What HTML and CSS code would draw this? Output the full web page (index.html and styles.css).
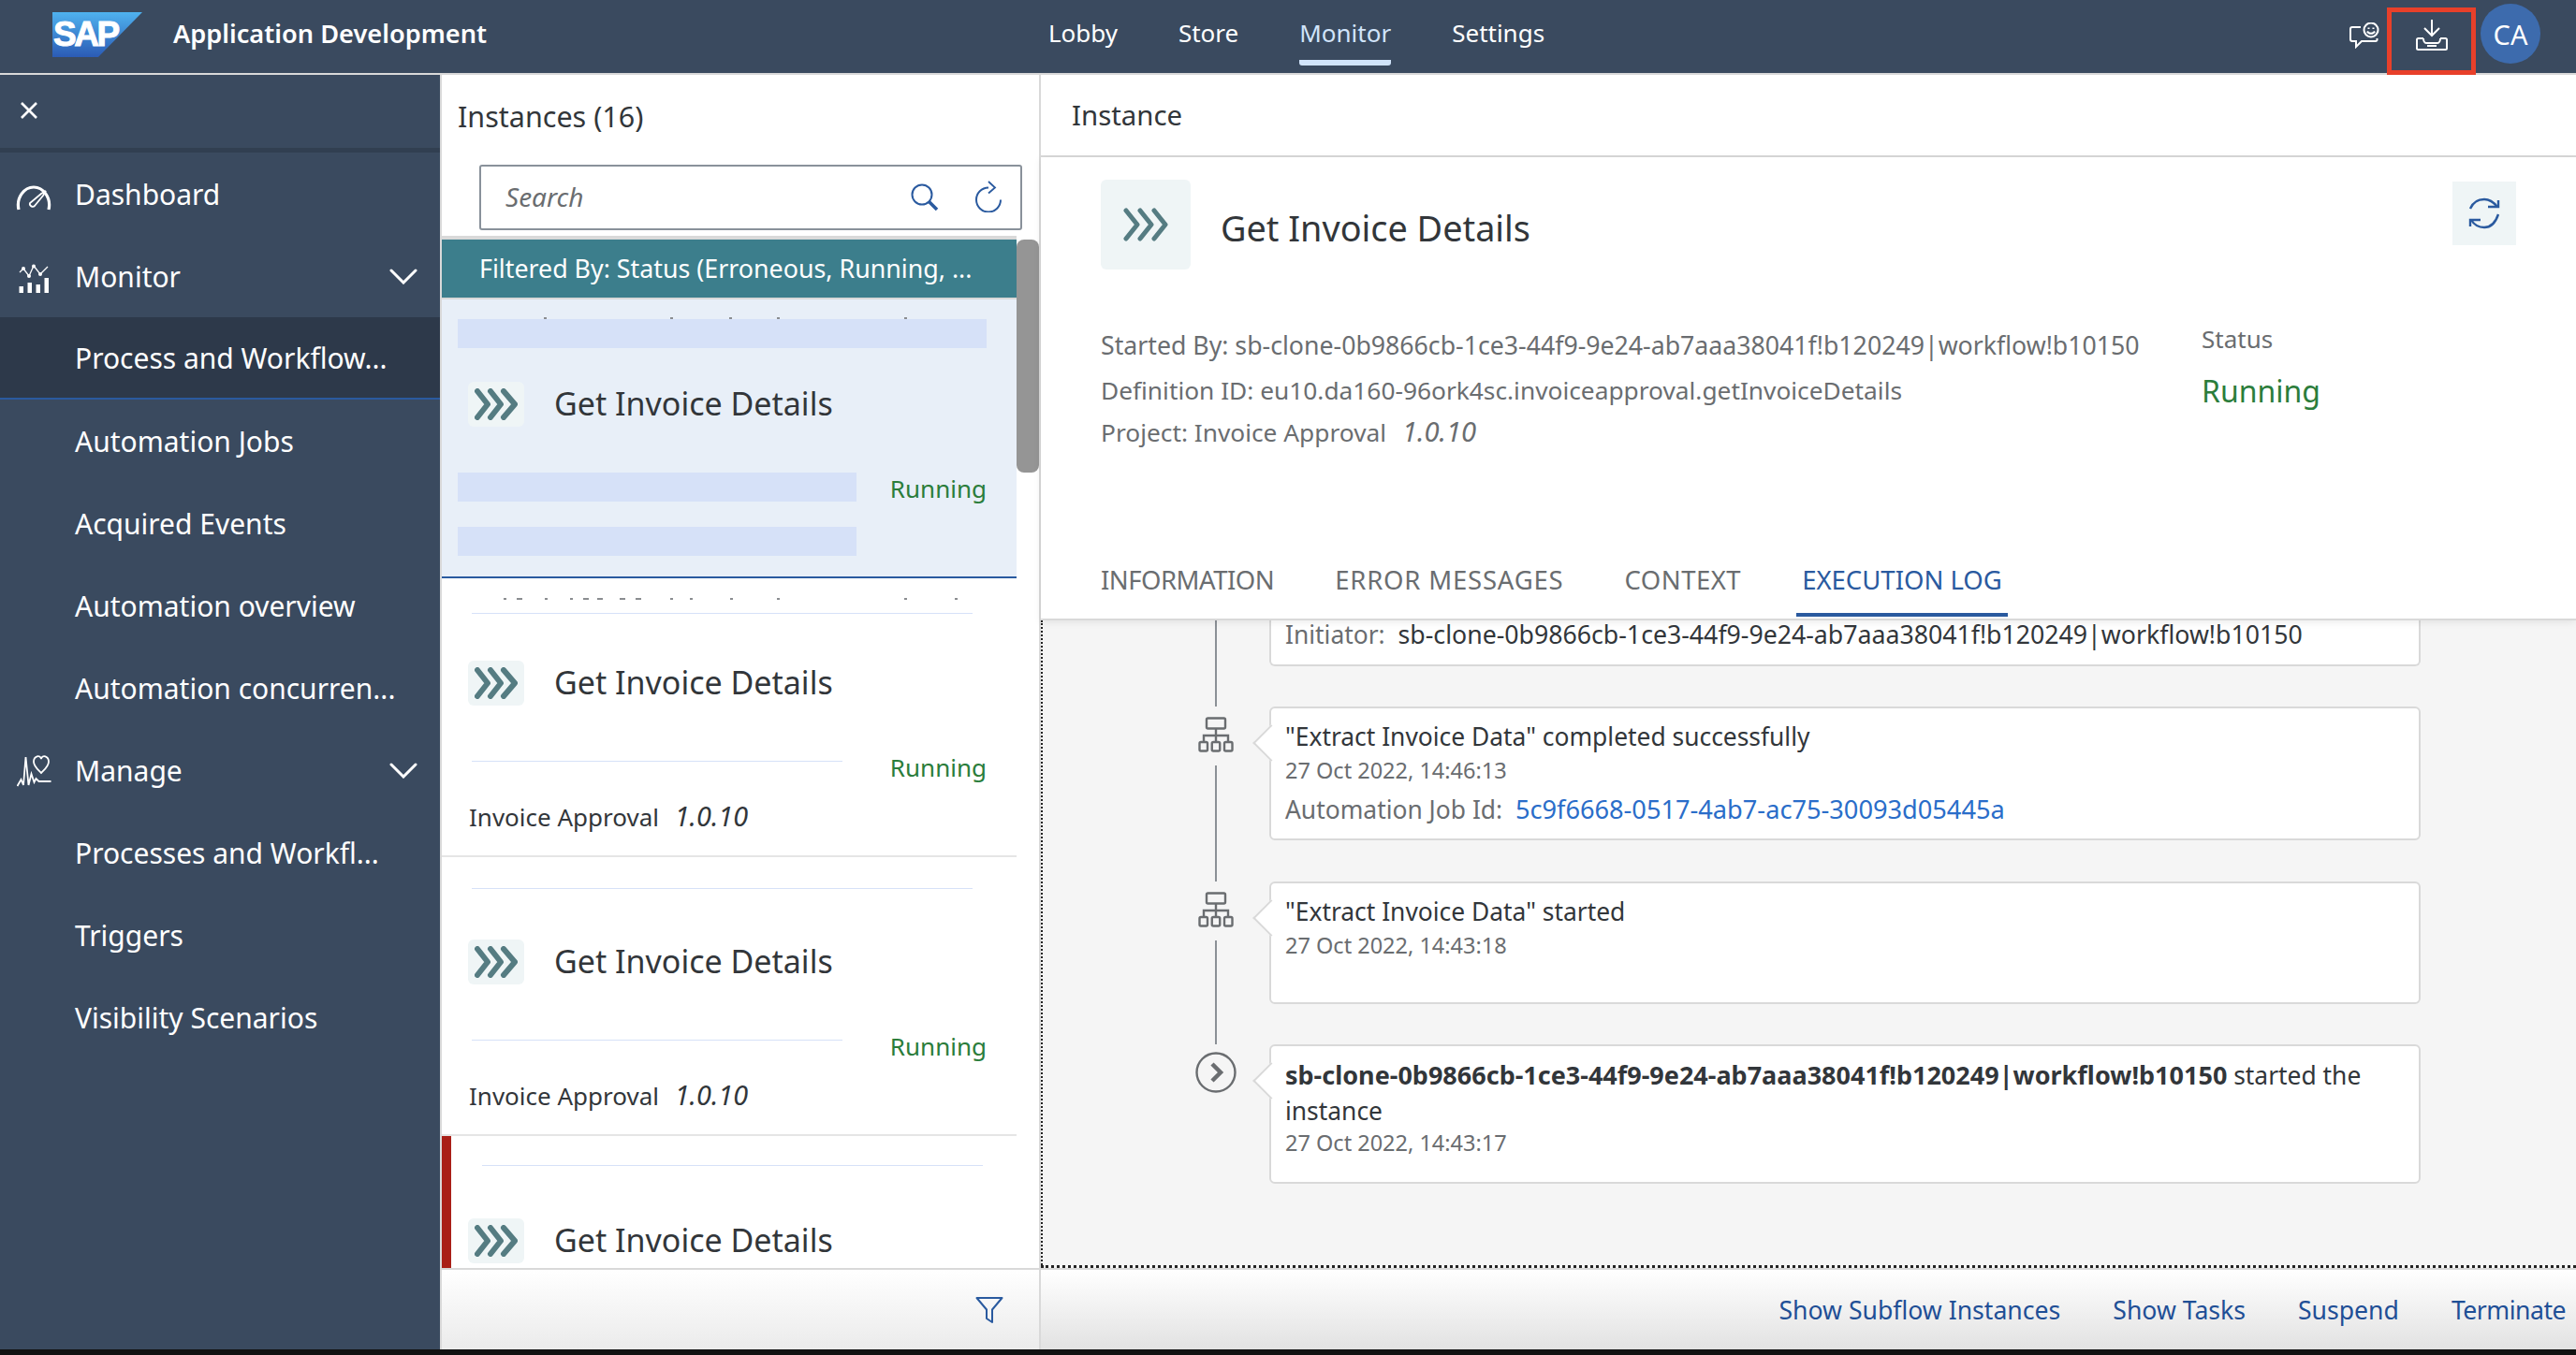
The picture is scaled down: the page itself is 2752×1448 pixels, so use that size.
FILE: index.html
```html
<!DOCTYPE html>
<html lang="en">
<head>
<meta charset="utf-8">
<title>Application Development</title>
<link rel="stylesheet" href="styles.css">
</head>
<body>
<div class="app">
  <header class="shell">
    <div class="brand">
      <div class="logo"><span class="logo-text">SAP</span></div>
      <div class="app-title">Application Development</div>
    </div>
    <nav class="top-nav">
      <a class="top-link">Lobby</a>
      <a class="top-link">Store</a>
      <a class="top-link is-active">Monitor</a>
      <a class="top-link">Settings</a>
    </nav>
    <div class="shell-actions">
      <svg class="ic-feedback" width="32" height="28" viewBox="0 0 32 28" fill="none" stroke="#fff" stroke-width="2"><path d="M12 5H3a2 2 0 0 0-2 2v11a2 2 0 0 0 2 2h4v6l6-6h15a1.500 1.500 0 0 0 1.500-1.500V17"/><circle cx="23" cy="8" r="7.500"/><path d="M19 9.500c1.500 3 6.500 3 8 0"/><path d="M20.500 5.500v1.500M25.500 5.500v1.500"/></svg>
      <div class="download-btn">
        <svg width="34" height="34" viewBox="0 0 34 34" fill="none" stroke="#fff" stroke-width="2"><path d="M17 1v17M9 10l8 8 8-8"/><path d="M8 21H2.500a1.500 1.500 0 0 0-1.500 1.500v9a1.500 1.500 0 0 0 1.500 1.500h29a1.500 1.500 0 0 0 1.500-1.500v-9a1.500 1.500 0 0 0-1.500-1.500H26"/><path d="M8 21c0 2 1 5 3 5h12c2 0 3-3 3-5"/><path d="M12 29h10"/></svg>
      </div>
      <div class="avatar">CA</div>
    </div>
  </header>

  <div class="main">
    <aside class="side">
      <div class="side-top">
        <svg width="20" height="20" viewBox="0 0 20 20" fill="none" stroke="#fff" stroke-width="2.600"><path d="M2 2l16 16M18 2L2 18"/></svg>
      </div>
      <div class="side-row"><span class="side-icon"><svg class="ic-gauge" width="38" height="27" viewBox="0 0 38 27" fill="none" stroke="#fff" stroke-width="3.200"><path d="M3 26C0 13 9 2 19 2s19 11 16 24"/><path d="M27 9l5-3-3 5-9 11c-2 2-6 0-5-3z" stroke-width="1.800"/></svg></span><span class="side-label">Dashboard</span></div>
      <div class="side-row"><span class="side-icon"><svg class="ic-monitor" width="33" height="31" viewBox="0 0 33 31" fill="none" stroke="#fff" stroke-width="1.300"><path d="M1 9l4-4 6 8 5-11 7 9 8-8"/><g fill="#fff" stroke="none"><circle cx="5" cy="5" r="2"/><circle cx="11" cy="13" r="2"/><circle cx="16" cy="2.500" r="2"/><circle cx="23" cy="11" r="2"/><rect x="0.500" y="24" width="4.500" height="7"/><rect x="9.500" y="20" width="4.500" height="11"/><rect x="18.500" y="22" width="4.500" height="9"/><rect x="27.500" y="15" width="4.500" height="16"/></g></svg></span><span class="side-label">Monitor</span><svg class="chev" width="30" height="18" viewBox="0 0 30 18" fill="none" stroke="#fff" stroke-width="3" stroke-linecap="round"><path d="M2 3l13 13L28 3"/></svg></div>
      <div class="side-row is-current"><span class="side-icon"></span><span class="side-label">Process and Workflow...</span></div>
      <div class="side-row"><span class="side-icon"></span><span class="side-label">Automation Jobs</span></div>
      <div class="side-row"><span class="side-icon"></span><span class="side-label">Acquired Events</span></div>
      <div class="side-row"><span class="side-icon"></span><span class="side-label">Automation overview</span></div>
      <div class="side-row"><span class="side-icon"></span><span class="side-label">Automation concurren...</span></div>
      <div class="side-row"><span class="side-icon"><svg class="ic-manage" width="37" height="36" viewBox="0 0 37 36" fill="none" stroke="#fff" stroke-width="1.800"><path d="M0.500 35l4-7 2.500 6L9.500 4l3 30 3-12 3 9 2-4 3 3h13"/><path d="M26 21c-3-3-8-7-8-12 0-6 7-8 8-3 1-5 8-3 8 3 0 5-5 9-8 12z"/></svg></span><span class="side-label">Manage</span><svg class="chev" width="30" height="18" viewBox="0 0 30 18" fill="none" stroke="#fff" stroke-width="3" stroke-linecap="round"><path d="M2 3l13 13L28 3"/></svg></div>
      <div class="side-row"><span class="side-icon"></span><span class="side-label">Processes and Workfl...</span></div>
      <div class="side-row"><span class="side-icon"></span><span class="side-label">Triggers</span></div>
      <div class="side-row"><span class="side-icon"></span><span class="side-label">Visibility Scenarios</span></div>
    </aside>

    <section class="list-panel">
      <div class="scroll-thumb"></div>
      <div class="list-head">Instances (16)</div>
      <div class="search-wrap">
        <div class="search">
          <span class="search-text">Search</span>
          <svg class="ic-search" width="30" height="30" viewBox="0 0 30 30" fill="none" stroke="#2a5a9f" stroke-width="2"><circle cx="12" cy="12" r="10.500"/><path d="M19.500 19.500L28 28" stroke-width="3.500"/></svg>
          <svg class="ic-reload" width="30" height="34" viewBox="0 0 30 34" fill="none" stroke="#2a5a9f" stroke-width="2"><path d="M15 7.500a13 13 0 1 0 13 13"/><path d="M15 1l7 6.500-7 6" stroke-width="1.800"/></svg>
        </div>
      </div>
      <div class="filter-bar">Filtered By: Status (Erroneous, Running, ...</div>
      <div class="list">
        <article class="item is-selected">
          <div class="item-top">
            <svg class="ticks ticks-a" width="400" height="2" viewBox="0 0 400 2" fill="#8a8d90"><rect x="0" width="3" height="2"/><rect x="135" width="3" height="2"/><rect x="198" width="3" height="2"/><rect x="249" width="3" height="2"/><rect x="385" width="3" height="2"/></svg>
            <div class="mask mask-wide"></div>
          </div>
          <div class="item-head">
            <span class="flow-icon"><svg width="46" height="34" viewBox="0 0 46 34" fill="none" stroke="#557c82" stroke-width="6" stroke-linecap="round" stroke-linejoin="round"><path d="M3 3l11 14L3 31M17 3l11 14-11 14M31 3l12 14-12 14"/></svg></span>
            <h3 class="item-title">Get Invoice Details</h3>
          </div>
          <div class="item-meta">
            <div class="meta-left">
              <div class="mask"></div>
              <div class="mask mask-gap"></div>
            </div>
            <span class="state">Running</span>
          </div>
        </article>
        <article class="item">
          <div class="item-top">
            <svg class="ticks ticks-b" width="490" height="2" viewBox="0 0 490 2" fill="#8a8d90"><rect x="0" width="3" height="2"/><rect x="14" width="6" height="2"/><rect x="44" width="3" height="2"/><rect x="71" width="3" height="2"/><rect x="85" width="6" height="2"/><rect x="100" width="6" height="2"/><rect x="124" width="6" height="2"/><rect x="141" width="6" height="2"/><rect x="178" width="3" height="2"/><rect x="199" width="3" height="2"/><rect x="242" width="3" height="2"/><rect x="292" width="3" height="2"/><rect x="428" width="3" height="2"/><rect x="482" width="3" height="2"/></svg>
            <div class="rule rule-wide"></div>
          </div>
          <div class="item-head">
            <span class="flow-icon"><svg width="46" height="34" viewBox="0 0 46 34" fill="none" stroke="#557c82" stroke-width="6" stroke-linecap="round" stroke-linejoin="round"><path d="M3 3l11 14L3 31M17 3l11 14-11 14M31 3l12 14-12 14"/></svg></span>
            <h3 class="item-title">Get Invoice Details</h3>
          </div>
          <div class="item-meta">
            <div class="meta-left">
              <div class="rule rule-short"></div>
              <div class="project">Invoice Approval <em class="version">1.0.10</em></div>
            </div>
            <span class="state">Running</span>
          </div>
        </article>
        <article class="item">
          <div class="item-top">
            <div class="rule rule-wide rule-plain"></div>
          </div>
          <div class="item-head">
            <span class="flow-icon"><svg width="46" height="34" viewBox="0 0 46 34" fill="none" stroke="#557c82" stroke-width="6" stroke-linecap="round" stroke-linejoin="round"><path d="M3 3l11 14L3 31M17 3l11 14-11 14M31 3l12 14-12 14"/></svg></span>
            <h3 class="item-title">Get Invoice Details</h3>
          </div>
          <div class="item-meta">
            <div class="meta-left">
              <div class="rule rule-short"></div>
              <div class="project">Invoice Approval <em class="version">1.0.10</em></div>
            </div>
            <span class="state">Running</span>
          </div>
        </article>
        <article class="item is-error">
          <div class="item-top">
            <div class="rule rule-wide rule-plain rule-shifted"></div>
          </div>
          <div class="item-head">
            <span class="flow-icon"><svg width="46" height="34" viewBox="0 0 46 34" fill="none" stroke="#557c82" stroke-width="6" stroke-linecap="round" stroke-linejoin="round"><path d="M3 3l11 14L3 31M17 3l11 14-11 14M31 3l12 14-12 14"/></svg></span>
            <h3 class="item-title">Get Invoice Details</h3>
          </div>
        </article>
      </div>
      <footer class="list-foot">
        <svg width="30" height="30" viewBox="0 0 30 30" fill="none" stroke="#2a5a9f" stroke-width="2" stroke-linejoin="round"><path d="M1.500 2h27L18 14.500V28l-6-4V14.500z"/></svg>
      </footer>
    </section>

    <section class="detail">
      <div class="detail-bar">Instance</div>
      <div class="detail-head">
        <div class="head-row">
          <span class="flow-icon flow-icon-lg"><svg width="48" height="36" viewBox="0 0 48 36" fill="none" stroke="#557c82" stroke-width="5" stroke-linecap="round" stroke-linejoin="round"><path d="M3 3l12 15L3 33M18 3l12 15-12 15M33 3l12 15-12 15"/></svg></span>
          <h2 class="detail-title">Get Invoice Details</h2>
          <span class="refresh-btn"><svg width="34" height="34" viewBox="0 0 34 34" fill="none" stroke="#2a5a9f" stroke-width="2.400"><path d="M2 12C5 5 10 2 17 2c6 0 10 3 14 8"/><path d="M32 18C29 27 24 32 17 32c-6 0-11-3-14-8"/><path d="M21 10h11V3M13 24H2v7"/></svg></span>
        </div>
        <div class="meta-row">
          <div class="meta-lines">
            <div class="meta-line meta-line-long">Started By: sb-clone-0b9866cb-1ce3-44f9-9e24-ab7aaa38041f!b120249|workflow!b10150</div>
            <div class="meta-line meta-line-gap">Definition ID: eu10.da160-96ork4sc.invoiceapproval.getInvoiceDetails</div>
            <div class="meta-line">Project: Invoice Approval <em class="version">1.0.10</em></div>
          </div>
          <div class="status-col">
            <div class="status-label">Status</div>
            <div class="status-value">Running</div>
          </div>
        </div>
        <div class="tabs">
          <span class="tab tab-info">INFORMATION</span>
          <span class="tab tab-err">ERROR MESSAGES</span>
          <span class="tab tab-ctx">CONTEXT</span>
          <span class="tab is-active">EXECUTION LOG</span>
        </div>
      </div>
      <div class="timeline">
        <div class="tl-row">
          <div class="tl-rail"><span class="tl-line"></span></div>
          <div class="tl-body">
            <div class="tl-card tl-card-cut">
              <div class="tl-text tl-text-cut"><span class="muted">Initiator:</span>&nbsp;<span class="tl-id">sb-clone-0b9866cb-1ce3-44f9-9e24-ab7aaa38041f!b120249|workflow!b10150</span></div>
            </div>
          </div>
        </div>
        <div class="tl-row">
          <div class="tl-rail">
            <svg class="tl-icon" width="38" height="38" viewBox="0 0 38 38" fill="none" stroke="#6a6d70" stroke-width="2.400"><rect x="9" y="1.500" width="20" height="11" rx="1.500"/><path d="M19 13v7M6 27v-7h26v7M19 20v7"/><rect x="1.500" y="27" width="8.500" height="9.500" rx="1.500"/><rect x="14.750" y="27" width="8.500" height="9.500" rx="1.500"/><rect x="28" y="27" width="8.500" height="9.500" rx="1.500"/></svg>
            <span class="tl-line tl-line-a"></span>
          </div>
          <div class="tl-body">
            <div class="tl-card tl-card-1 has-arrow">
              <div class="tl-text">"Extract Invoice Data" completed successfully</div>
              <div class="tl-date">27 Oct 2022, 14:46:13</div>
              <div class="tl-text tl-job"><span class="muted">Automation Job Id:</span>&nbsp; <a class="job-link">5c9f6668-0517-4ab7-ac75-30093d05445a</a></div>
            </div>
          </div>
        </div>
        <div class="tl-row">
          <div class="tl-rail">
            <svg class="tl-icon" width="38" height="38" viewBox="0 0 38 38" fill="none" stroke="#6a6d70" stroke-width="2.400"><rect x="9" y="1.500" width="20" height="11" rx="1.500"/><path d="M19 13v7M6 27v-7h26v7M19 20v7"/><rect x="1.500" y="27" width="8.500" height="9.500" rx="1.500"/><rect x="14.750" y="27" width="8.500" height="9.500" rx="1.500"/><rect x="28" y="27" width="8.500" height="9.500" rx="1.500"/></svg>
            <span class="tl-line tl-line-b"></span>
          </div>
          <div class="tl-body">
            <div class="tl-card tl-card-2 has-arrow">
              <div class="tl-text">"Extract Invoice Data" started</div>
              <div class="tl-date">27 Oct 2022, 14:43:18</div>
            </div>
          </div>
        </div>
        <div class="tl-row">
          <div class="tl-rail">
            <svg class="tl-icon tl-icon-start" width="44" height="44" viewBox="0 0 44 44" fill="none" stroke="#6a6d70" stroke-width="2.400"><circle cx="22" cy="22" r="20.500"/><path d="M18 13l9 9-9 9" stroke-width="4.500"/></svg>
          </div>
          <div class="tl-body">
            <div class="tl-card tl-card-3 has-arrow">
              <div class="tl-text tl-wrap"><b class="tl-strong">sb-clone-0b9866cb-1ce3-44f9-9e24-ab7aaa38041f!b120249|workflow!b10150</b> started the<br>instance</div>
              <div class="tl-date tl-date-tight">27 Oct 2022, 14:43:17</div>
            </div>
          </div>
        </div>
      </div>
      <footer class="detail-foot">
        <a class="foot-link">Show Subflow Instances</a>
        <a class="foot-link">Show Tasks</a>
        <a class="foot-link">Suspend</a>
        <a class="foot-link foot-link-end">Terminate</a>
      </footer>
    </section>
  </div>
</div>
</body>
</html>
```

FILE: styles.css
```css
* { box-sizing: border-box; }
html, body { margin: 0; height: 100%; overflow: hidden; background: #111; }
body { font-family: "Noto Sans", "Open Sans", sans-serif; color: #32363a; }
h2, h3 { margin: 0; font-weight: 400; }
em { font-style: italic; }

.app { height: 1442px; display: flex; flex-direction: column; }

/* shell */
.shell { height: 80px; flex: none; display: grid; grid-template-columns: 1fr auto 1fr; background: #3a4a5f; border-bottom: 2px solid #d9d9d9; color: #fff; position: relative; }
.brand { display: flex; align-items: center; padding: 0 0 6px 56px; gap: 33px; }
.logo { width: 96px; height: 48px; display: flex; align-items: center; clip-path: polygon(0 0, 100% 0, 51% 100%, 0 100%); background: linear-gradient(#4fb2ef, #2b5bb5); }
.logo-text { font-family: "Liberation Sans", sans-serif; font-weight: 700; font-size: 37px; letter-spacing: -2.500px; margin-left: 1px; color: #fff; -webkit-text-stroke: 1px #fff; }
.app-title { font-size: 27.200px; font-weight: 600; white-space: nowrap; margin-top: -3px; }
.top-nav { display: flex; gap: 65px; margin-left: 18px; }
.top-link { height: 70px; display: flex; align-items: center; font-size: 26px; border-bottom: 6px solid transparent; padding-top: 6px; }
.top-link.is-active { color: #d1e4fa; border-bottom-color: #d1e4fa; border-radius: 3px; }
.shell-actions { display: flex; justify-content: flex-end; align-items: flex-start; padding-right: 38px; }
.ic-feedback { margin-top: 24px; margin-right: 8px; }
.download-btn { width: 95px; height: 72px; margin-top: 8px; border: 5px solid #e8402a; display: flex; justify-content: center; padding-top: 7px; margin-right: 5px; position: relative; z-index: 2; }
.avatar { width: 64px; height: 64px; margin-top: 4px; border-radius: 50%; background: #3d6bad; color: #fff; display: flex; align-items: center; justify-content: center; font-size: 29px; }

.main { flex: 1; min-height: 0; display: grid; grid-template-columns: 472px 640px 1fr; }

/* side nav */
.side { background: #3a4a5f; border-right: 2px solid #d9d9d9; color: #fff; overflow: hidden; }
.side-top { height: 83px; border-bottom: 5px solid #313f51; display: flex; align-items: center; padding-left: 21px; padding-bottom: 3px; }
.side-row { height: 88px; display: flex; align-items: center; padding-right: 24px; }
.side-row.is-current { background: #2d394a; border-bottom: 2px solid #2a5a9f; }
.side-icon { width: 80px; flex: none; display: flex; padding-left: 17px; }
.side-label { font-size: 30px; white-space: nowrap; flex: 1; }
.ic-gauge { margin-top: 8px; }
.ic-monitor { margin-top: 4px; margin-left: 3px; }
.ic-manage { margin-left: 1px; }
.chev { flex: none; }

/* instances */
.list-panel { display: flex; flex-direction: column; border-right: 2px solid #d9d9d9; min-height: 0; background: #fff; position: relative; }
.scroll-thumb { position: absolute; top: 176px; right: 0; width: 24px; height: 249px; background: #959595; border-radius: 8px; z-index: 1; }
.list-head { height: 96px; flex: none; padding: 26px 0 0 17px; font-size: 30.500px; line-height: 36px; }
.search-wrap { flex: none; padding: 0 18px 0 40px; height: 76px; }
.search { height: 70px; border: 2px solid #89919a; border-radius: 3px; display: flex; align-items: center; padding: 0 19px 0 26px; }
.search-text { flex: 1; font-style: italic; font-size: 28px; color: #6a6d70; margin-top: -2px; }
.ic-search { margin-right: 38px; }
.ic-reload { margin-bottom: 2px; }
.filter-bar { flex: none; width: 614px; height: 68px; background: #3c7e8c; color: #fff; font-size: 26.800px; border-top: 4px solid #d9d9d9; border-bottom: 2px solid #d9d9d9; padding: 0 0 2px 40px; display: flex; align-items: center; white-space: nowrap; }
.list { flex: 1; min-height: 0; overflow: hidden; }
.item { width: 614px; height: 298px; padding: 0 32px 0 17px; border-bottom: 2px solid #e5e5e5; }
.item.is-selected { background: #e8eff8; border-bottom-color: #2a5a9f; }
.item.is-error { padding-left: 7px; border-left: 10px solid #a91f17; border-bottom: 0; }
.item-top { height: 88px; position: relative; }
.ticks { position: absolute; display: block; }
.ticks-a { top: 19px; left: 92px; }
.ticks-b { top: 21px; left: 49px; }
.mask { height: 31px; background: #d6e1f8; width: 426px; }
.mask-wide { width: 565px; position: absolute; top: 21px; left: 0; }
.mask-gap { margin-top: 27px; }
.rule { height: 1px; background: #d6e1f8; }
.rule-wide { position: absolute; left: 15px; top: 37px; width: 535px; }
.rule-plain { top: 33px; }
.rule-shifted { left: 26px; top: 31px; }
.item-head { height: 48px; display: flex; align-items: center; }
.flow-icon { width: 60px; height: 48px; margin-left: 11px; flex: none; background: #eff5f6; border-radius: 6px; display: flex; align-items: center; justify-content: center; }
.item-title { font-size: 34px; margin: -2px 0 0 32px; white-space: nowrap; }
.item-meta { margin-top: 49px; display: flex; justify-content: space-between; }
.meta-left { width: 426px; }
.state { font-size: 26px; line-height: 34px; color: #2b7d3b; }
.rule-short { width: 396px; margin: 10px 0 0 15px; }
.project { margin: 41px 0 0 12px; font-size: 26px; line-height: 34px; white-space: nowrap; }
.version { margin-left: 10px; font-style: italic; font-size: 1.110em; }
.list-foot { flex: none; height: 87px; border-top: 2px solid #d9d9d9; background: linear-gradient(#fff, #ebebeb); display: flex; justify-content: flex-end; align-items: center; padding-right: 38px; }

/* detail */
.detail { display: flex; flex-direction: column; min-height: 0; min-width: 0; background: #fff; }
.detail-bar { height: 88px; flex: none; padding-left: 33px; display: flex; align-items: center; font-size: 29.400px; border-bottom: 2px solid #d9d9d9; }
.detail-head { height: 495px; flex: none; padding: 24px 0 0 64px; border-bottom: 2px solid #d9d9d9; display: flex; flex-direction: column; box-shadow: 0 2px 8px rgba(0,0,0,.08); position: relative; z-index: 1; background: #fff; }
.head-row { display: flex; align-items: center; height: 96px; }
.flow-icon-lg { width: 96px; height: 96px; margin-left: 0; }
.detail-title { font-size: 37.800px; margin: 6px 0 0 32px; }
.refresh-btn { margin-left: auto; margin-right: 64px; width: 68px; height: 68px; align-self: flex-start; margin-top: 2px; background: #eff5f6; display: flex; align-items: center; justify-content: center; }
.meta-row { margin-top: 59px; display: flex; color: #6a6d70; font-size: 26.300px; }
.meta-lines { width: 1176px; }
.meta-line { line-height: 44px; height: 44px; white-space: nowrap; }
.meta-line-long { font-size: 26.700px; }
.meta-line-gap { margin-top: 4px; }
.status-col { margin-top: -7px; }
.status-label { line-height: 44px; font-size: 26px; }
.status-value { margin-top: 6px; font-size: 32px; line-height: 56px; color: #2b7d3b; }
.tabs { margin-top: auto; margin-left: -6px; margin-bottom: 2px; display: flex; gap: 53px; }
.tab { height: 76px; padding: 0 6px; display: flex; align-items: center; font-size: 27.500px; color: #6a6d70; border-bottom: 4px solid transparent; }
.tab-info { letter-spacing: -.5px; }
.tab-err { letter-spacing: .8px; }
.tab-ctx { letter-spacing: .5px; }
.tab.is-active { color: #2a5a9f; border-bottom-color: #2a5a9f; }

.timeline { flex: 1; min-height: 0; background: #f5f5f5; border-left: 2px dotted #222; border-bottom: 3px dotted #222; }
.tl-row { display: flex; }
.tl-rail { width: 242px; flex: none; display: flex; flex-direction: column; padding-left: 146px; }
.tl-line { display: block; width: 2px; flex: 1; margin-left: 38px; background: #8b9096; }
.tl-line-a, .tl-line-b { margin-top: 14px; }
.tl-icon { margin: 11px 0 0 20px; display: block; }
.tl-icon-start { margin: 8px 0 0 17px; }
.tl-body { width: 1230px; padding-bottom: 44px; }
.tl-card { background: #fff; border: 2px solid #d9d9d9; border-radius: 6px; padding: 12px 15px 0; position: relative; }
.tl-card-cut { height: 49px; margin-bottom: -1px; border-top: 0; padding-top: 0; border-radius: 0 0 6px 6px; }
.tl-card-1 { height: 143px; }
.tl-card-2 { height: 131px; margin-bottom: -1px; }
.tl-card-3 { height: 149px; }
.has-arrow::before { content: ""; position: absolute; left: -14px; top: 23px; width: 26px; height: 26px; background: #fff; border-left: 2px solid #d9d9d9; border-bottom: 2px solid #d9d9d9; transform: rotate(45deg); }
.tl-text { font-size: 26.400px; line-height: 36px; color: #32363a; white-space: nowrap; position: relative; }
.tl-text-cut { line-height: 30px; }
.tl-id { font-size: 26.700px; margin-left: 7px; }
.tl-wrap { line-height: 38px; }
.tl-strong { font-weight: 700; font-size: 27px; }
.muted { color: #6a6d70; }
.tl-date { font-size: 23.500px; line-height: 36px; color: #6a6d70; position: relative; }
.tl-date-tight { margin-top: -3px; }
.tl-job { margin-top: 6px; }
.job-link { color: #2a6dc9; font-size: 27.200px; }
.detail-foot { flex: none; height: 87px; border-top: 2px solid #d9d9d9; background: linear-gradient(#fff, #e2e2e2); display: flex; justify-content: flex-end; align-items: center; gap: 56px; padding-right: 11px; }
.foot-link { font-size: 26.600px; color: #1f4f96; white-space: nowrap; }
.foot-link-end { letter-spacing: -.5px; }
```
